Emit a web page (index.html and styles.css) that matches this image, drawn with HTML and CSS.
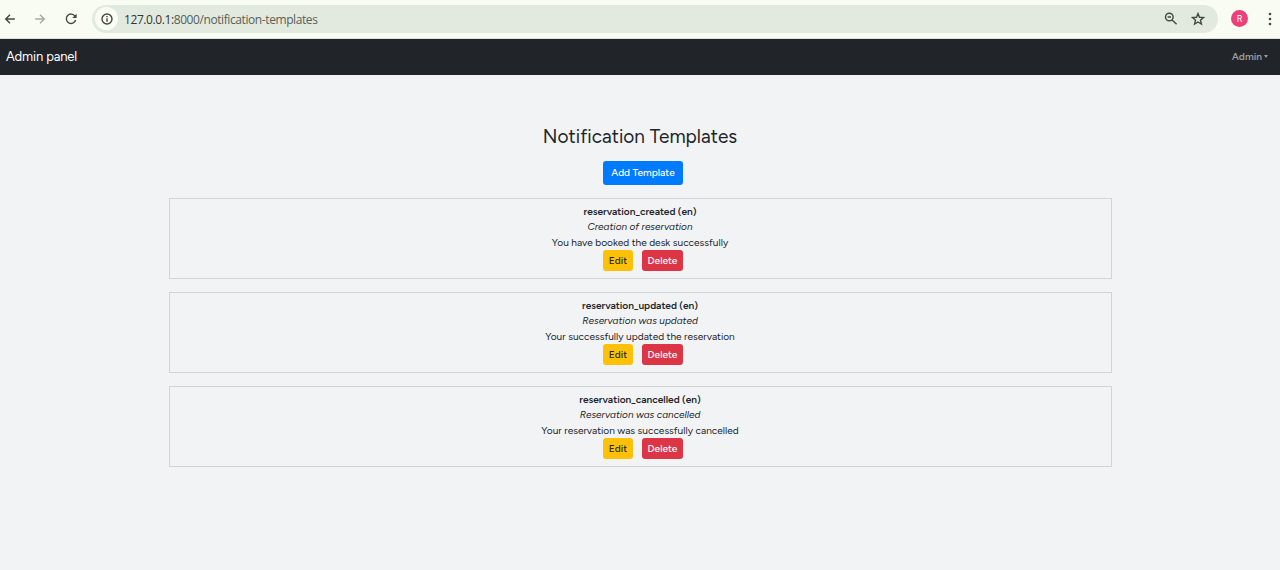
FILE: index.html
```html
<!DOCTYPE html>
<html lang="en">
<head>
<meta charset="utf-8">
<title>Notification Templates</title>
<link rel="stylesheet" href="styles.css">
</head>
<body>
<header class="browser">
  <svg class="ico back" viewBox="0 0 16 16"><path d="M12.800 8H4M8 3.700 3.700 8 8 12.300"/></svg>
  <svg class="ico forward" viewBox="0 0 16 16"><path d="M3.200 8H12M8 3.700 12.300 8 8 12.300"/></svg>
  <svg class="ico reload" viewBox="0 0 16 16"><path d="M12 5.200A4.700 4.700 0 1 0 12.600 9"/><path class="solid" d="M13.600 2.800V7H9.200Z"/></svg>
  <div class="address">
    <span class="site"><svg class="ico" viewBox="0 0 16 16"><circle cx="8" cy="8" r="5"/><path d="M8 7.300v3.400M8 5v1.300"/></svg></span>
    <span class="url"><span class="host">127.0.0.1:</span>8000/notification-templates</span>
    <svg class="ico zoom" viewBox="0 0 16 16"><circle cx="6.300" cy="6" r="3.800"/><path d="M9.100 8.900 13.600 13.300M4.600 6h3.400"/></svg>
    <svg class="ico star" viewBox="0 0 16 16"><path d="M8 2.600 9.500 6.300 13.500 6.600 10.500 9.200 11.400 13.100 8 11 4.600 13.100 5.500 9.200 2.500 6.600 6.500 6.300Z"/></svg>
  </div>
  <span class="avatar">R</span>
  <svg class="menu" viewBox="0 0 4 14"><circle cx="2" cy="2" r="1.300"/><circle cx="2" cy="7" r="1.300"/><circle cx="2" cy="12" r="1.300"/></svg>
</header>
<nav class="navbar">
  <span class="brand">Admin panel</span>
  <span class="account">Admin<i class="caret"></i></span>
</nav>
<main class="content">
  <h1 class="title">Notification Templates</h1>
  <button class="btn add">Add Template</button>
  <section class="list">
    <article class="card">
      <strong class="name">reservation_created (en)</strong>
      <em class="subject">Creation of reservation</em>
      <span class="text">You have booked the desk successfully</span>
      <div class="actions"><button class="btn edit">Edit</button><button class="btn delete">Delete</button></div>
    </article>
    <article class="card">
      <strong class="name">reservation_updated (en)</strong>
      <em class="subject">Reservation was updated</em>
      <span class="text">Your successfully updated the reservation</span>
      <div class="actions"><button class="btn edit">Edit</button><button class="btn delete">Delete</button></div>
    </article>
    <article class="card">
      <strong class="name">reservation_cancelled (en)</strong>
      <em class="subject">Reservation was cancelled</em>
      <span class="text">Your reservation was successfully cancelled</span>
      <div class="actions"><button class="btn edit">Edit</button><button class="btn delete">Delete</button></div>
    </article>
  </section>
</main>
</body>
</html>
```
FILE: styles.css
```css
* { box-sizing: border-box; }
body { margin: 0; height: 570px; overflow: hidden; background: #f2f3f5; color: #212529; font-family: Figtree, Inter, sans-serif; }
.browser { height: 39px; display: flex; align-items: center; padding: 0 8px 1px 2px; background: #f9fcf3; border-bottom: 1px solid #dce3d8; }
.ico { width: 16px; height: 16px; flex: none; fill: none; stroke: #424940; stroke-width: 1.4; }
.solid { fill: #424940; stroke: none; }
.forward { margin-left: 14px; stroke: #a5aca2; }
.reload { margin-left: 14.5px; }
.address { width: 1126px; height: 28px; margin-left: 13.5px; display: flex; align-items: center; padding: 0 12px 0 3px; border-radius: 14px; background: #e2eadf; }
.site { width: 23px; height: 23px; margin-right: 6px; display: flex; align-items: center; justify-content: center; border-radius: 50%; background: #f9fcf3; }
.url { flex: 1; padding-top: 2px; font: 12px/18px "Open Sans", sans-serif; letter-spacing: -.41px; color: #586057; }
.host { color: #303630; }
.star { margin-left: 11px; }
.avatar { width: 17px; height: 17px; margin-left: 13.5px; border-radius: 50%; background: #ec407a; color: #fff; font: 9px/18px Roboto, sans-serif; text-align: center; }
.menu { width: 4px; height: 14px; margin-left: 20px; flex: none; fill: #424940; }
.navbar { height: 36px; display: flex; align-items: center; justify-content: space-between; padding: 0 12px 1px 6px; background: #212529; }
.brand { color: #fff; font-size: 13px; letter-spacing: -.12px; }
.account { display: flex; align-items: center; color: #9b9d9f; font-size: 10.2px; font-weight: 600; }
.caret { margin-left: 2px; border: 2.5px solid transparent; border-width: 3px 2.5px 0; border-top-color: #9b9d9f; }
.content { display: flex; flex-direction: column; align-items: center; padding-top: 49px; }
.title { margin: 0; font-size: 19px; line-height: 26px; font-weight: 400; letter-spacing: .02px; white-space: nowrap; }
.btn { border: 0; padding: 0 0 1px; border-radius: 3px; font-family: inherit; font-size: 10.15px; font-weight: 500; color: #fff; white-space: nowrap; }
.add { width: 80px; height: 24px; margin: 11px 0 0 6px; background: #007bff; }
.list { width: 943px; margin: 13px 0 0 1px; display: flex; flex-direction: column; gap: 13px; }
.card { height: 81px; display: flex; flex-direction: column; align-items: center; padding: 5px 1px 0 0; border: 1px solid #d2d4d7; font-size: 10.15px; line-height: 15px; white-space: nowrap; }
.name { font-weight: 600; }
.subject { font-size: 10px; }
.text { padding-top: 1px; line-height: 15px; }
.actions { display: flex; gap: 9px; margin-left: 6px; }
.actions .btn { height: 21px; }
.edit { width: 30px; background: #ffc107; }
.actions .edit { color: #212529; }
.delete { width: 41px; background: #dc3545; }
```
